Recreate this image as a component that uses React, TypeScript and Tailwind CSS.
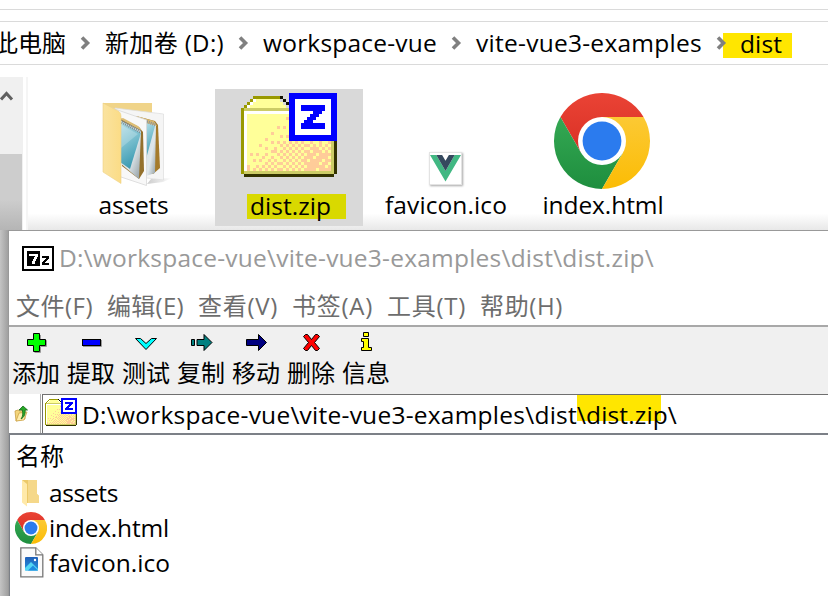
import React, { useLayoutEffect, useRef, useState } from "react";

/** A single line of text whose tracking is computed so it fills `width` pixels. */
function Fit({ children, width, className = "" }: { children: string; width: number; className?: string }) {
  const ref = useRef<HTMLSpanElement>(null);
  const [tracking, setTracking] = useState(0);
  useLayoutEffect(() => {
    if (ref.current) {
      const natural = ref.current.getBoundingClientRect().width;
      setTracking((width - natural) / children.length);
    }
  }, []);
  return (
    <span className={"block shrink-0 whitespace-nowrap " + className} style={{ width }}>
      <span ref={ref} style={{ letterSpacing: tracking }}>
        {children}
      </span>
    </span>
  );
}

function Crumb() {
  return (
    <svg width="11" height="16" viewBox="0 0 11 16" className="shrink-0">
      <path d="M2 2.500 L7.500 8 L2 13.500" fill="none" stroke="#808080" strokeWidth="3.600" />
    </svg>
  );
}

const dither: [number, number[]][] = [
  [8, [15]],
  [11, [12, 14]],
  [13, [10]],
  [14, [13, 15]],
  [15, [8]],
  [16, [10, 12, 14, 16, 18, 20, 23, 26, 29]],
  [17, [6, 13, 15, 17, 19, 21, 22, 24, 26, 28]],
  [18, [8, 11, 14, 16, 18, 20, 23, 24, 25, 27, 29]],
  [19, [10, 11, 13, 15, 17, 19, 21, 22, 24, 25, 26, 28]],
  [20, [3, 5, 8, 12, 14, 16, 18, 20, 22, 23, 24, 26, 27, 28, 29]],
  [21, [7, 10, 13, 15, 17, 19, 21, 22, 23, 25, 26, 27, 28]],
  [22, [4, 6, 9, 11, 14, 16, 18, 20, 21, 23, 24, 25, 26, 28, 29]],
  [23, [8, 10, 12, 13, 15, 17, 19, 21, 22, 23, 24, 25, 27, 28]],
  [24, [2, 5, 7, 9, 11, 14, 16, 18, 20, 22, 23, 24, 25, 26, 27, 29]],
  [25, [2, 4, 6, 8, 10, 12, 13, 15, 17, 19, 21, 22, 23, 24, 26, 27, 28, 29]],
];

function ZipFolder({ size, className = "" }: { size: number; className?: string }) {
  return (
    <svg width={size} height={size} viewBox="0 0 32 32" shapeRendering="crispEdges" className={className}>
      <path d="M4 2h9v1h1v1h1v1h-13v-1h1v-1h1z" fill="#ffff99" />
      <path d="M4 1h9v1h-9zM3 2h1v1h-1zM2 3h1v1h-1zM1 4h1v1h-1zM0 5h1v22h-1z" fill="#999900" />
      <path d="M4 2h1v1h-1zM3 3h1v1h-1zM2 4h1v1h-1z" fill="#fff" />
      <path d="M13 1h1v1h-1zM14 2h1v1h-1zM15 3h1v1h-1z" fill="#111100" />
      <rect x="1" y="5" width="30" height="22" fill="#cccc66" />
      <rect x="1" y="6" width="29" height="20" fill="#fff" />
      <rect x="2" y="7" width="28" height="19" fill="#ffff99" />
      {dither.map(([row, cols]) => cols.map((c) => <rect key={`${row}-${c}`} x={c} y={row} width="1" height="1" fill="#ffcc99" />))}
      <path d="M1 27h30v1h-30zM31 16h1v11h-1z" fill="#333300" />
      <rect x="16" y="0" width="16" height="16" fill="#00f" />
      <rect x="18" y="2" width="12" height="12" fill="#fff" />
      <path d="M20 4h8v2h-1v1h-1v1h-1v1h-1v1h4v2h-8v-2h1v-1h1v-1h1v-1h1v-1h-4z" fill="#00f" />
    </svg>
  );
}

function Chrome({ size, id }: { size: number; id: string }) {
  return (
    <svg width={size} height={size} viewBox="-48 -48 96 96" className="shrink-0">
      <defs>
        <linearGradient id={id + "r"} x1="0" y1="0" x2="0" y2="1">
          <stop offset="0" stopColor="#ea4335" />
          <stop offset="1" stopColor="#d93025" />
        </linearGradient>
        <linearGradient id={id + "g"} x1="0" y1="0" x2="0" y2="1">
          <stop offset="0" stopColor="#34a853" />
          <stop offset="1" stopColor="#1e8e3e" />
        </linearGradient>
        <linearGradient id={id + "y"} x1="0" y1="0" x2="0" y2="1">
          <stop offset="0" stopColor="#fcc934" />
          <stop offset="1" stopColor="#fbbc04" />
        </linearGradient>
      </defs>
      <path d="M-41.57 -24A48 48 0 0 1 41.57 -24H0L-20.78 12Z" fill={`url(#${id}r)`} />
      <path d="M-41.57 -24A48 48 0 0 0 0 48L20.78 12H-20.78Z" fill={`url(#${id}g)`} />
      <path d="M41.57 -24A48 48 0 0 1 0 48L20.78 12L0 -24Z" fill={`url(#${id}y)`} />
      <circle r="24" fill="#fff" />
      <circle r="19.4" fill="#2b7bee" />
    </svg>
  );
}

function AssetsFolder() {
  return (
    <svg width="76" height="88" viewBox="100 99 76 88">
      <defs>
        <linearGradient id="leaf" x1="0" y1="0" x2="1" y2="0">
          <stop offset="0" stopColor="#fae3a0" />
          <stop offset="1" stopColor="#fbdc86" />
        </linearGradient>
        <linearGradient id="glass" x1="0" y1="0" x2="0.3" y2="1">
          <stop offset="0" stopColor="#b9dfe7" />
          <stop offset="0.45" stopColor="#81c3d2" />
          <stop offset="1" stopColor="#3c9bb2" />
        </linearGradient>
        <linearGradient id="metal" x1="0" y1="0" x2="1" y2="1">
          <stop offset="0" stopColor="#c8dde5" />
          <stop offset="0.6" stopColor="#dfe7eb" />
          <stop offset="1" stopColor="#8d999e" />
        </linearGradient>
        <linearGradient id="shade" x1="0" y1="0" x2="1" y2="0">
          <stop offset="0" stopColor="#ccc" />
          <stop offset="1" stopColor="#fff" />
        </linearGradient>
      </defs>
      <path d="M150 179L171 178L162 182L146 184Z" fill="url(#shade)" />
      <path d="M102 103H151V168H120Z" fill="#f0d489" />
      <path d="M114 108L162.500 114V180L146 178L120 160Z" fill="#f5f5f5" stroke="#ddd" strokeWidth=".7" />
      <path d="M135 116L154 121L157 125L159 168L152 174L144 170Z" fill="#a57b2b" />
      <path d="M144 120L155 125L154 173L145 176Z" fill="url(#metal)" />
      <path d="M144 122L154 126L145 159Z" fill="url(#glass)" />
      <path d="M135 116L153 121L156 126L145 123Z" fill="#d7b76f" />
      <path d="M144 121L155 125" stroke="#8c9498" strokeWidth="3" strokeDasharray="1 1" />
      <path d="M108 107L145.500 120V185.500L117 176Z" fill="#f8f8f8" stroke="#d8d8d8" strokeWidth=".8" />
      <path d="M119 118L138 127L142 132L143 171L138 179L121 166Z" fill="#94712d" />
      <path d="M119 120L140 131L138 179L119 163Z" fill="url(#metal)" />
      <path d="M119 121L140 133L129 169L119 162Z" fill="url(#glass)" />
      <path d="M119 119L122 118L137 126L141 131Z" fill="#dcbc73" />
      <path d="M119 121L140 132" stroke="#7d8b91" strokeWidth="3.500" strokeDasharray="1 1" />
      <path d="M120 125L137 134L120 148Z" fill="#fff" opacity=".22" />
      <path d="M102 103L118 111.500Q120 113 120 116V183.500L102 172Z" fill="url(#leaf)" stroke="#efd184" strokeWidth=".6" />
    </svg>
  );
}

function VueFile() {
  return (
    <div className="mb-[4px] flex size-[33px] border border-[#e3e3e3] bg-white shadow-[1px_1px_2px_rgba(0,0,0,0.35)]">
      <svg width="32" height="30" viewBox="0 0 32 30">
        <path d="M0 1.500H6.500L16 18L25.500 1.500H32L16 29Z" fill="#41b883" />
        <path d="M6.500 1.500H12.500L16 7.500L19.500 1.500H25.500L16 18Z" fill="#35495e" />
      </svg>
    </div>
  );
}

function Tile({ icon, children, selected = false }: { icon: React.ReactNode; children: React.ReactNode; selected?: boolean }) {
  return (
    <div className={"flex h-[137px] w-[148px] shrink-0 flex-col items-center " + (selected ? "bg-[#d9d9d9]" : "")}>
      <div className="flex h-[100px] items-end justify-center">{icon}</div>
      <div className="flex h-[32px] items-center leading-[32px]">{children}</div>
    </div>
  );
}

const black = { stroke: "#000", strokeWidth: 1 };

const tools: { label: string; icon: React.ReactNode }[] = [
  {
    label: "添加",
    icon: (
      <>
        <path d="M18.500 3v5.500h6v6h-6v6h-6" fill="none" stroke="#999" />
        <path d="M11.500 1.500h6v6h6v6h-6v6h-6v-6h-6v-6h6z" fill="#0f0" {...black} />
      </>
    ),
  },
  {
    label: "提取",
    icon: (
      <>
        <path d="M6 14.500H24.500V8" fill="none" stroke="#999" />
        <rect x="5.500" y="7.500" width="18" height="6" fill="#00f" {...black} />
      </>
    ),
  },
  { label: "测试", icon: <path d="M3.500 6.500h5l5.500 5l5.500 -5h5l-10.500 11z" fill="#0ff" {...black} /> },
  {
    label: "复制",
    icon: <path d="M4.500 7.500h3v6h-3zM10 7.500h7v-5l8 8l-8 8v-5h-7z" fill="#008080" {...black} />,
  },
  { label: "移动", icon: <path d="M4.500 7.500h12v-5l8 8l-8 8v-5h-12z" fill="#000080" {...black} /> },
  {
    label: "删除",
    icon: <path d="M6.500 4.500l2 -2h2l4 5l4 -5h2l2 2l-5 6l5 6l-2 2h-2l-4 -5l-4 5h-2l-2 -2l5 -6z" fill="#f00" {...black} />,
  },
  {
    label: "信息",
    icon: <path d="M11.500 0.500h5v4h-5zM9.500 6.500h7v9h3v3h-10v-3h2v-6h-2z" fill="#ff0" {...black} />,
  },
];

const menus: { label: string; width: number; cell: string }[] = [
  { label: "文件(F)", width: 77, cell: "w-[91px]" },
  { label: "编辑(E)", width: 77, cell: "w-[91px]" },
  { label: "查看(V)", width: 80, cell: "w-[94px]" },
  { label: "书签(A)", width: 81, cell: "w-[95px]" },
  { label: "工具(T)", width: 79, cell: "w-[93px]" },
  { label: "帮助(H)", width: 83, cell: "w-[97px]" },
];

function SevenZip() {
  return (
    <svg width="32" height="25" viewBox="0 0 32 25" shapeRendering="crispEdges" className="shrink-0">
      <rect width="32" height="25" fill="#000" />
      <rect x="2" y="2" width="28" height="21" fill="#fff" />
      <rect x="5" y="5" width="13" height="15" fill="#000" />
      <path d="M7 8h9v3h-1v2h-1v2h-1v3h-3v-3h1v-2h1v-2h1v-1h-6z" fill="#fff" />
      <path d="M20 10h7v3h-1v1h-1v1h-1v1h-1v1h4v2h-7v-3h1v-1h1v-1h1v-1h1v-1h-4z" fill="#000" />
    </svg>
  );
}

function UpFolder() {
  return (
    <svg width="16" height="18" viewBox="0 0 16 18">
      <path d="M1 6l3-1 2 1 5-1v9l-9 2z" fill="#f3d57b" stroke="#c9a045" strokeWidth=".8" />
      <path d="M2 16l3-8 8-1-3 8z" fill="#ffedac" stroke="#cda348" strokeWidth=".8" />
      <path d="M5 5L9 1l4.500 4H11c.5 4-.5 7-4 9 2-3 2-5 1.300-9z" fill="#27a827" stroke="#176b1a" strokeWidth=".8" />
    </svg>
  );
}

function SmallFolder() {
  return (
    <svg width="20" height="28" viewBox="0 0 20 28">
      <path d="M1 1h15v14l2 2v7H5z" fill="#ecc969" />
      <path d="M7 1h9v14l2 2v7H7z" fill="#f5d88a" />
      <path d="M1 1l5 4v22.500l-5-4z" fill="#ffe9a9" />
    </svg>
  );
}

function ImageFile() {
  return (
    <svg width="24" height="31" viewBox="0 0 24 31">
      <defs>
        <linearGradient id="pic" x1="0" y1="0" x2="0" y2="1">
          <stop offset="0" stopColor="#1f5fb8" />
          <stop offset="1" stopColor="#2494df" />
        </linearGradient>
      </defs>
      <path d="M.8 .8h15l7 7v22H.8z" fill="#fafafa" stroke="#777" strokeWidth="1.300" />
      <path d="M15.800 .8v7h7" fill="#fff" stroke="#777" strokeWidth="1.300" />
      <rect x="5" y="10" width="13" height="13.500" rx="1" fill="url(#pic)" />
      <path d="M5 21l6-6 7 7v1.500H5z" fill="#53d6f3" />
      <path d="M8 23.500l5-5 5 5z" fill="#1e8ce0" />
      <circle cx="15" cy="13" r="1.200" fill="#fff" />
    </svg>
  );
}

function ListRow({ icon, label, width }: { icon: React.ReactNode; label: string; width: number }) {
  return (
    <div className="flex h-[35px] items-center">
      <div className="flex w-[34px] shrink-0 items-center justify-center">{icon}</div>
      <Fit width={width} className="ml-[1px] leading-[35px]">{label}</Fit>
    </div>
  );
}

export default function App() {
  return (
    <div className="flex h-[596px] w-[828px] flex-col overflow-hidden bg-white font-['Open_Sans','Noto_Sans_CJK_SC',sans-serif] text-[24.5px] text-black">
      <div className="h-[10px] shrink-0 border-b border-[#dadada]" />
      <div className="h-[12px] shrink-0 border-b border-[#dadada]" />
      <nav className="flex h-[43px] shrink-0 items-center border-b border-[#dadada] leading-[42px]">
        <Fit width={72} className="-ml-[6px] text-[24px]">此电脑</Fit>
        <div className="flex w-[39px] shrink-0 justify-center"><Crumb /></div>
        <Fit width={119} className="text-[24px]">新加卷 (D:)</Fit>
        <div className="flex w-[39px] shrink-0 justify-center"><Crumb /></div>
        <Fit width={174}>workspace-vue</Fit>
        <div className="flex w-[39px] shrink-0 justify-center"><Crumb /></div>
        <Fit width={226}>vite-vue3-examples</Fit>
        <div className="z-10 -mr-[4px] flex w-[25px] shrink-0 justify-end"><Crumb /></div>
        <div className="mt-[4px] flex h-[25px] w-[69px] shrink-0 items-center bg-[#ffe600] pl-[17px]">
          <Fit width={42} className="-mt-[4px] leading-[25px]">dist</Fit>
        </div>
      </nav>

      <section className="flex h-[165px] shrink-0">
        <div className="mt-[12px] flex w-[23px] shrink-0 flex-col bg-[#f0f0f0]">
          <svg width="14" height="77" viewBox="0 0 14 77" className="shrink-0">
            <path d="M1 22.500L6.500 16.500L12 22.500" fill="none" stroke="#606060" strokeWidth="3" />
          </svg>
          <div className="w-[22px] flex-1 bg-gradient-to-b from-[#cdcdcd] from-60% to-[#b5b5b5]" />
        </div>
        <div className="mt-[12px] ml-[3px] w-[2px] shrink-0 bg-[#f5f5f5]" />
        <div className="flex flex-1 gap-[8px] bg-gradient-to-b from-white from-90% to-[#e8e8e8] pt-[24px] pl-[31px]">
          <Tile icon={<div className="mb-[2px] ml-[11px]"><AssetsFolder /></div>}>
            <Fit width={70} className="ml-[1px]">assets</Fit>
          </Tile>
          <Tile selected icon={<ZipFolder size={96} />}>
            <div className="mt-[3px] ml-[15px] flex h-[25px] w-[99px] items-center bg-[#d9d900] pl-[3px]">
              <Fit width={81} className="-mt-[3px] leading-[25px]">dist.zip</Fit>
            </div>
          </Tile>
          <Tile icon={<VueFile />}>
            <Fit width={122} className="ml-[2px]">favicon.ico</Fit>
          </Tile>
          <Tile icon={<div className="ml-[2px]"><Chrome size={96} id="big" /></div>}>
            <Fit width={121} className="ml-[4px]">index.html</Fit>
          </Tile>
        </div>
      </section>

      <div className="flex h-[366px] shrink-0">
        <div className="w-[8px] shrink-0 bg-gradient-to-r from-[#c4c4c4] to-[#a0a0a0]" />
        <main className="flex flex-1 flex-col border-t border-l border-[#999] bg-white">
          <header className="flex h-[54px] shrink-0 items-center pl-[13px]">
            <SevenZip />
            <Fit width={595} className="ml-[5px] leading-[54px] text-[#999]">{"D:\\workspace-vue\\vite-vue3-examples\\dist\\dist.zip\\"}</Fit>
          </header>
          <div className="flex h-[42px] shrink-0 items-center border-b-2 border-[#a8a8a8] pt-[2px] pl-[7px] text-[24px] leading-[40px] text-[#6d6d6d]">
            {menus.map((m) => (
              <div key={m.label} className={"shrink-0 " + m.cell}>
                <Fit width={m.width}>{m.label}</Fit>
              </div>
            ))}
          </div>
          <div className="flex h-[67px] shrink-0 gap-[7px] bg-[#f0f0f0] pl-[3px]">
            {tools.map((t) => (
              <div key={t.label} className="flex w-[48px] flex-col items-center">
                <svg width="29" height="21" viewBox="0 0 29 21" className="mt-[5px] shrink-0">
                  {t.icon}
                </svg>
                <Fit width={48} className="text-[24px] leading-[39px]">{t.label}</Fit>
              </div>
            ))}
          </div>
          <div className="flex h-[41px] shrink-0 border-b-2 border-[#7c8087]">
            <div className="flex w-[32px] shrink-0 items-center border-r border-[#aaa] pl-[5px]">
              <UpFolder />
            </div>
            <div className="ml-px flex flex-1 border-t border-l border-[#6f6f6f] pl-[2px]">
              <ZipFolder size={32} className="mt-[3px] shrink-0" />
              <div className="ml-[5px] flex leading-[40px]">
                <Fit width={495}>{"D:\\workspace-vue\\vite-vue3-examples\\dist"}</Fit>
                <div className="flex h-[26px] w-[84px] shrink-0 bg-[#ffe600]">
                  <Fit width={100}>{"\\dist.zip\\"}</Fit>
                </div>
              </div>
            </div>
          </div>
          <div className="flex flex-1 flex-col border-l border-[#7c8087] pl-[4px]">
            <Fit width={48} className="ml-[2px] pt-[2px] text-[24px] leading-[38px]">名称</Fit>
            <ListRow icon={<SmallFolder />} label="assets" width={69} />
            <ListRow icon={<Chrome size={32} id="small" />} label="index.html" width={120} />
            <ListRow icon={<div className="ml-[2px]"><ImageFile /></div>} label="favicon.ico" width={121} />
          </div>
        </main>
      </div>
    </div>
  );
}
